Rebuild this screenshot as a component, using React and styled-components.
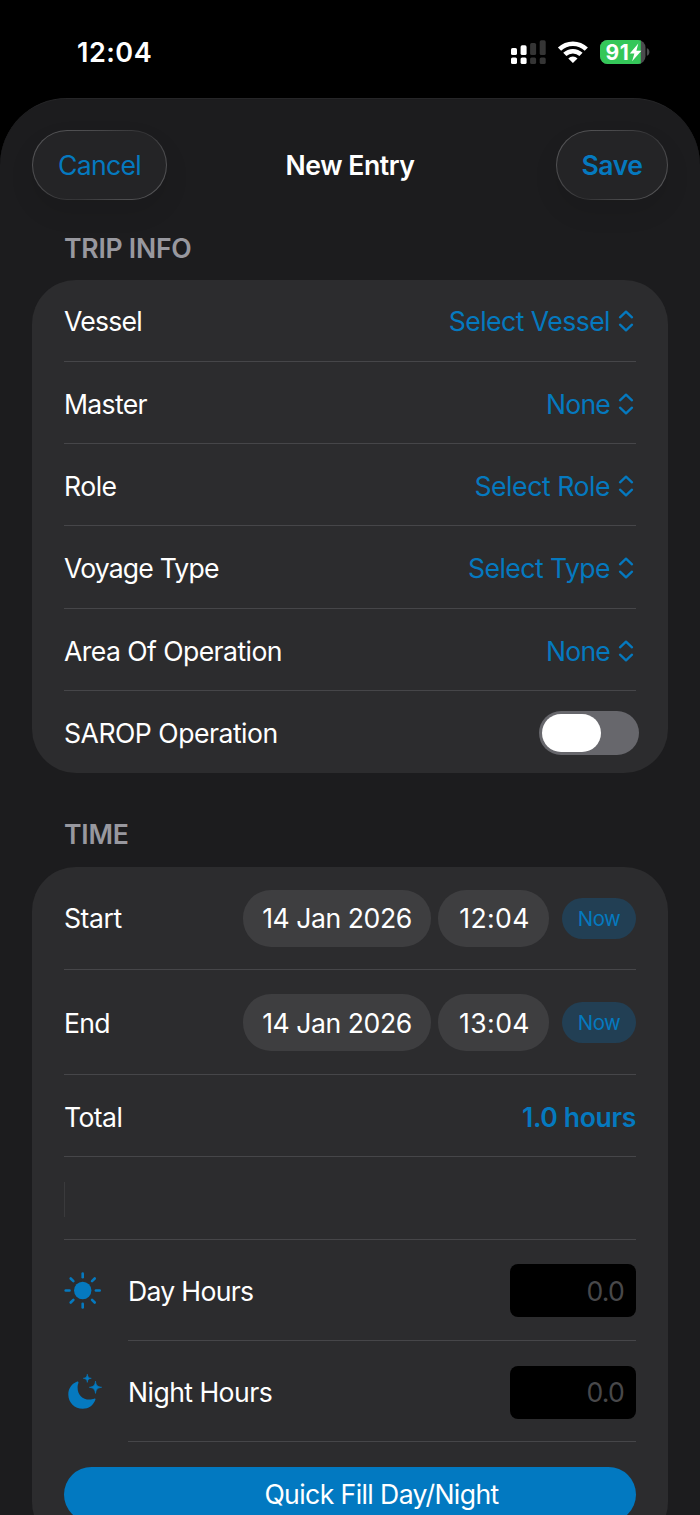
import React from 'react';
import styled, { createGlobalStyle } from 'styled-components';

const blue = '#0579bf';

const GlobalStyle = createGlobalStyle`
  * { box-sizing: border-box; }
  html, body { margin: 0; background: #000; }
  body {
    font-family: Inter, "Liberation Sans", sans-serif;
    font-size: 26.6px;
    color: #fff;
    -webkit-font-smoothing: antialiased;
  }
  button { font: inherit; border: 0; margin: 0; padding: 0; background: none; }
`;

const Screen = styled.div`
  width: 700px;
  height: 1515px;
  overflow: hidden;
  display: flex;
  flex-direction: column;
  background: #000;
`;

const StatusBar = styled.div`
  flex: none;
  height: 98px;
  padding: 5px 50px 0 77px;
  display: flex;
  align-items: center;
  justify-content: space-between;
`;

const Clock = styled.span`
  font-weight: 600;
  font-size: 27px;
  padding-top: 1px;
  letter-spacing: 0.5px;
`;

const StatusIcons = styled.svg`
  display: block;
  width: 140px;
  height: 26px;
`;

const Sheet = styled.main`
  flex: none;
  height: 1600px;
  border-radius: 67px 67px 0 0;
  background: #1c1c1e;
  border-top: 1px solid #262628;
  padding: 31px 32px 0;
`;

const NavBar = styled.header`
  height: 70px;
  display: grid;
  grid-template-columns: 1fr auto 1fr;
  align-items: center;
`;

const Title = styled.h1`
  margin: 0;
  font-size: 26.6px;
  font-weight: 600;
  letter-spacing: -0.45px;
  text-align: center;
`;

const PillButton = styled.button`
  height: 70px;
  width: ${(p) => p.$w}px;
  justify-self: ${(p) => p.$side};
  border-radius: 35px;
  color: ${blue};
  font-weight: ${(p) => (p.$strong ? 600 : 400)};
  letter-spacing: ${(p) => p.$ls || 0}px;
  border: 1px solid transparent;
  background:
    linear-gradient(#242426, #242426) padding-box,
    linear-gradient(135deg, #5a5a5c 0%, #4a4a4c 30%, #343436 55%, #4a4a4c 75%, #5c5c5e 100%) border-box;
  box-shadow: 0 12px 26px rgba(0, 0, 0, 0.09);
`;

const SectionTitle = styled.h2`
  margin: 0;
  height: ${(p) => p.$h}px;
  padding: 0 32px ${(p) => p.$below}px;
  display: flex;
  align-items: flex-end;
  font-size: 26.6px;
  line-height: 32px;
  font-weight: 600;
  color: #98989f;
  letter-spacing: -0.25px;
`;

const Card = styled.section`
  border-radius: 44px;
  background: #2c2c2e;
  padding: 0 32px ${(p) => p.$bottom || 0}px;
`;

const Row = styled.div`
  height: ${(p) => p.$h}px;
  display: flex;
  align-items: center;
  padding: ${(p) => (p.$raise ? '0 0 1px' : '1px 0 0')};
  position: relative;
  &::after {
    content: "";
    display: ${(p) => (p.$last ? 'none' : 'block')};
    position: absolute;
    left: ${(p) => p.$inset || 0}px;
    right: 0;
    bottom: 0;
    height: 1px;
    background: #464649;
  }
`;

const Label = styled.span`
  margin-right: auto;
  padding-top: ${(p) => p.$drop || 0}px;
  letter-spacing: ${(p) => p.$ls || 0}px;
`;

const Picker = styled.button`
  display: flex;
  align-items: center;
  gap: 8px;
  color: ${blue};
  letter-spacing: ${(p) => p.$ls || 0}px;
  svg { width: 16px; height: 24px; margin-right: 2px; }
`;

const Toggle = styled.button`
  width: 100px;
  height: 44px;
  margin-right: -3px;
  padding: 3px;
  border-radius: 22px;
  background: #67676c;
`;

const Knob = styled.span`
  display: block;
  width: 59px;
  height: 38px;
  border-radius: 19px;
  background: #fff;
`;

const Chip = styled.button`
  width: ${(p) => p.$w}px;
  height: 57px;
  border-radius: 28px;
  background: #3e3e40;
  color: #fff;
  margin-right: ${(p) => p.$gap}px;
  padding: ${(p) => p.$drop || 0}px 0 0 ${(p) => p.$pad || 0}px;
  letter-spacing: ${(p) => p.$ls || 0}px;
`;

const NowButton = styled.button`
  width: 74px;
  height: 41px;
  border-radius: 20.5px;
  background: #223f54;
  color: ${blue};
  font-size: 20.4px;
  letter-spacing: -0.5px;
`;

const Total = styled.strong`
  font-weight: 600;
  color: ${blue};
  letter-spacing: -0.35px;
`;

const Caret = styled.span`
  width: 1px;
  height: 35px;
  background: #3a3a3c;
`;

const IconSlot = styled.span`
  width: 64px;
  height: 40px;
  svg { display: block; width: 40px; height: 40px; }
`;

const HoursField = styled.div`
  width: 126px;
  height: 53px;
  border-radius: 8px;
  background: #000;
  color: #48484a;
  display: flex;
  align-items: center;
  justify-content: flex-end;
  padding: 0 12px ${(p) => (p.$raise ? 0 : 1)}px 0;
  margin-bottom: ${(p) => (p.$raise ? 1 : 0)}px;
  letter-spacing: -0.8px;
`;

const FillButton = styled.button`
  display: block;
  width: 100%;
  height: 55px;
  margin-top: 25px;
  padding: 0 0 2px 63px;
  border-radius: 27.5px;
  background: #0279c1;
  color: #fff;
  letter-spacing: -0.6px;
`;

function UpDown() {
  return (
    <svg viewBox="0 0 16 24" fill="none" stroke="currentColor" strokeWidth="2.3" strokeLinecap="round" strokeLinejoin="round">
      <path d="M2 8.300 8 2.600 14 8.300M2 15.700 8 21.400 14 15.700" />
    </svg>
  );
}

function SunIcon() {
  const rays = [0, 45, 90, 135, 180, 225, 270, 315];
  return (
    <svg viewBox="0 0 40 40">
      <circle cx="18.700" cy="19.500" r="8.700" fill={blue} />
      <g stroke={blue} strokeWidth="2.600" strokeLinecap="round">
        {rays.map((a) => (
          <line key={a} x1="18.700" y1="2.500" x2="18.700" y2="6.300" transform={`rotate(${a} 18.700 19.500)`} />
        ))}
      </g>
    </svg>
  );
}

function MoonIcon() {
  return (
    <svg viewBox="0 -1 40 40" fill={blue}>
      <path d="M13.200 8.600c.8-.3 1.500.4 1.200 1.300-.5 1.400-.8 2.600-.8 4.500 0 7.400 4.700 12.100 12 12.100 1.800 0 3-.3 4.600-.8.9-.3 1.500.3 1.200 1.100C29.300 32.600 24.500 35.800 18.800 35.800 10.700 35.800 4.300 29.500 4.300 21.400 4.300 15.500 8 10.600 13.200 8.600Z" />
      <path d="M23.300 1.200c.4 2.800 1.200 3.700 4 4.100-2.800.4-3.600 1.300-4 4.100-.4-2.800-1.200-3.700-4-4.100 2.800-.4 3.600-1.300 4-4.100Z" stroke={blue} strokeWidth=".6" strokeLinejoin="round" />
      <path d="M31.500 8.200c.6 4.300 1.900 5.500 6.100 6.100-4.200.6-5.500 1.900-6.100 6.100-.6-4.200-1.900-5.500-6.100-6.100 4.200-.6 5.500-1.800 6.100-6.100Z" stroke={blue} strokeWidth=".7" strokeLinejoin="round" />
    </svg>
  );
}

function Status() {
  return (
    <StatusIcons viewBox="510 38 140 26">
      <g fill="#fff">
        <rect x="511" y="47" width="6" height="7" rx="1.6" />
        <rect x="520.600" y="44.300" width="6" height="9.700" rx="1.600" />
        <rect x="511" y="56.500" width="6" height="6.500" rx="1.600" />
        <rect x="520.600" y="56.500" width="6" height="6.500" rx="1.600" />
      </g>
      <g fill="#353535">
        <rect x="530.100" y="42" width="6" height="12" rx="1.600" />
        <rect x="539.700" y="39.300" width="6" height="14.700" rx="1.600" />
        <rect x="530.100" y="56.500" width="6" height="6.500" rx="1.600" />
        <rect x="539.700" y="56.500" width="6" height="6.500" rx="1.600" />
      </g>
      <g fill="none" stroke="#fff" strokeWidth="4.600">
        <path d="M559.500 48.200a19.300 19.300 0 0 1 26.800 0" />
        <path d="M564.800 53.400a11.800 11.800 0 0 1 16.200 0" />
      </g>
      <path d="M572.900 62l-4.600-4.600a6.500 6.500 0 0 1 9.200 0Z" fill="#fff" />
      <clipPath id="cell"><rect x="600" y="39" width="45.500" height="24" rx="7.500" /></clipPath>
      <g clipPath="url(#cell)">
        <rect x="600" y="39" width="46" height="24" fill="#4b4b4d" />
        <rect x="600" y="39" width="40.800" height="24" fill="#34c759" />
      </g>
      <path d="M646.800 47.300c2 .5 2.600 2 2.600 3.700s-.6 3.200-2.600 3.700Z" fill="#4b4b4d" />
      <text x="605.400" y="58.500" fontFamily="Inter, sans-serif" fontWeight="700" fontSize="21" textLength="23.500" fill="#fff">91</text>
      <path d="M638.300 42.600l-8.500 9.900h4.600l-2.300 7.700 9.300-10.400h-5Z" fill="#fff" />
    </StatusIcons>
  );
}

const trip = [
  { label: 'Vessel', value: 'Select Vessel', h: 82, ls: -0.75, vls: -0.55, raise: true },
  { label: 'Master', value: 'None', h: 82, ls: -0.7, vls: -0.8 },
  { label: 'Role', value: 'Select Role', h: 82, ls: -0.5, vls: -0.45 },
  { label: 'Voyage Type', value: 'Select Type', h: 83, ls: -0.83, vls: -0.55 },
  { label: 'Area Of Operation', value: 'None', h: 82, ls: -0.57, vls: -0.8 },
];

const times = [
  { label: 'Start', time: '12:04', h: 103, ls: -0.45, drop: 0 },
  { label: 'End', time: '13:04', h: 105, ls: -0.7, drop: 2 },
];

export default function App() {
  return (
    <>
      <GlobalStyle />
      <Screen>
        <StatusBar>
          <Clock>12:04</Clock>
          <Status />
        </StatusBar>
        <Sheet>
          <NavBar>
            <PillButton $w={135} $side="start" $ls={-0.7}>Cancel</PillButton>
            <Title>New Entry</Title>
            <PillButton $w={112} $side="end" $strong $ls={-0.5}>Save</PillButton>
          </NavBar>
          <SectionTitle $h={80} $below={16}>TRIP INFO</SectionTitle>
          <Card>
            {trip.map((r) => (
              <Row key={r.label} $h={r.h} $raise={r.raise}>
                <Label $ls={r.ls}>{r.label}</Label>
                <Picker $ls={r.vls}>{r.value}<UpDown /></Picker>
              </Row>
            ))}
            <Row $h={82} $last>
              <Label $ls={-0.5}>SAROP Operation</Label>
              <Toggle role="switch" aria-checked="false"><Knob /></Toggle>
            </Row>
          </Card>
          <SectionTitle $h={94} $below={17}>TIME</SectionTitle>
          <Card $bottom={24}>
            {times.map((r) => (
              <Row key={r.label} $h={r.h} $raise>
                <Label $ls={r.ls} $drop={r.drop}>{r.label}</Label>
                <Chip $w={188} $gap={7} $ls={-0.45} $drop={r.drop}>14 Jan 2026</Chip>
                <Chip $w={111} $gap={13} $pad={2} $ls={0.4} $drop={r.drop}>{r.time}</Chip>
                <NowButton>Now</NowButton>
              </Row>
            ))}
            <Row $h={82}>
              <Label $ls={-0.6}>Total</Label>
              <Total>1.0 hours</Total>
            </Row>
            <Row $h={83}><Caret /></Row>
            <Row $h={101} $inset={64}>
              <IconSlot><SunIcon /></IconSlot>
              <Label $ls={-0.7}>Day Hours</Label>
              <HoursField $raise>0.0</HoursField>
            </Row>
            <Row $h={101} $inset={64}>
              <IconSlot><MoonIcon /></IconSlot>
              <Label $ls={-0.55}>Night Hours</Label>
              <HoursField>0.0</HoursField>
            </Row>
            <FillButton>Quick Fill Day/Night</FillButton>
          </Card>
        </Sheet>
      </Screen>
    </>
  );
}
